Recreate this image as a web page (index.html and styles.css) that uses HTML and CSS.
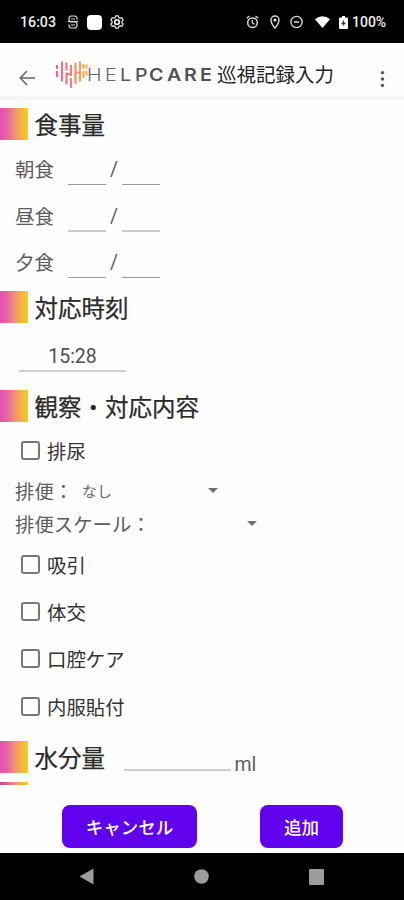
FILE: index.html
```
<!DOCTYPE html>
<html lang="ja">
<head>
<meta charset="utf-8">
<title>巡視記録入力</title>
<link rel="stylesheet" href="styles.css">
</head>
<body>
<div class="screen">
  <div class="status">
    <span class="clock">16:03</span>
    <svg class="st-s" width="12" height="14" viewBox="0 0 12 14"><path d="M10 4.500V3.300Q10 1 7.500 1h-3Q2 1 2 3.300v1.400Q2 7 4.500 7h3Q10 7 10 9v1.500Q10 13 7.500 13h-3Q2 13 2 10.500V9.500M1 6.500H11M4 4h4M4 10h4" fill="none" stroke="#ddd" stroke-width="1.200"/></svg>
    <span class="st-square"></span>
    <svg class="st-gear" width="14" height="14" viewBox="0 0 14 14"><path d="M5.700.8h2.600l.5 1.700 1.300.7 1.700-.5 1.300 2.200-1.200 1.300v1.600l1.200 1.300-1.300 2.200-1.700-.5-1.300.7-.5 1.700H5.700l-.5-1.700-1.300-.7-1.700.5L.9 9.100l1.200-1.300V6.200L.9 4.900l1.300-2.200 1.700.5 1.300-.7z" fill="none" stroke="#ddd" stroke-width="1.300"/><circle cx="7" cy="7" r="2.300" fill="none" stroke="#fff" stroke-width="1.600"/></svg>
    <span class="grow"></span>
    <svg class="st-alarm" width="13" height="14" viewBox="0 0 13 14"><circle cx="6.500" cy="7.700" r="4.800" fill="none" stroke="#ddd" stroke-width="1.500"/><path d="M.7 3.300 3.500.9M12.300 3.300 9.500.9M6.300 5v3l2.200 1.300" fill="none" stroke="#ddd" stroke-width="1.300"/></svg>
    <svg class="st-pin" width="10" height="14" viewBox="0 0 10 14"><path d="M5 13Q1 8.500 1 5a4 4 0 0 1 8 0Q9 8.500 5 13z" fill="none" stroke="#ddd" stroke-width="1.400"/><circle cx="5" cy="5" r="1.600" fill="#ddd"/></svg>
    <svg class="st-dnd" width="13" height="14" viewBox="0 0 13 14"><circle cx="6.500" cy="7" r="5.600" fill="none" stroke="#ddd" stroke-width="1.300"/><path d="M3.800 7h5.400" stroke="#ddd" stroke-width="1.500"/></svg>
    <svg class="st-wifi" width="15" height="12" viewBox="0 0 15 12"><path d="M0 3.300Q7.500-3 15 3.300L7.500 12z" fill="#fff"/></svg>
    <svg class="st-batt" width="9" height="13" viewBox="0 0 9 13"><path d="M3 0h3v1.500h2q1 0 1 1V12q0 1-1 1H1q-1 0-1-1V2.500q0-1 1-1h2z" fill="#fff"/><path d="M4.500 4.500v5M2.500 7.500h4" stroke="#333" stroke-width="1.300"/></svg>
    <span class="pct">100%</span>
  </div>

  <header class="appbar">
    <svg class="back" width="17" height="16" viewBox="0 0 17 16"><path d="M16 8H1.500M8 1 1.300 8 8 15" fill="none" stroke="#666" stroke-width="1.600"/></svg>
    <svg class="logo" width="33" height="29" viewBox="0 0 33 29">
      <defs><linearGradient id="heart" gradientUnits="userSpaceOnUse" x1="0" y1="0" x2="32" y2="0"><stop offset="0" stop-color="#e0669f"/><stop offset=".45" stop-color="#f07c84"/><stop offset="1" stop-color="#f5b548"/></linearGradient></defs>
      <path d="M2 5v4M2 11v6M7 1.500v20M11.500 2.500v8M11.500 12.500v12M16 5v11M16 18v10M20.500 3v21M25 1.500v20M28.500 4v4.500M28.500 11v7M31.500 4.500v4M31.500 11v4M11.500 14h4.500M20.500 12.500h4.500" fill="none" stroke="url(#heart)" stroke-width="2.200"/>
    </svg>
    <span class="brand"><b class="w1">H</b><b class="w1">E</b><b class="w2">L</b><b class="w3">P</b><b class="w4">C</b><b class="w4">A</b><b class="w4">R</b><b class="w4">E</b></span>
    <h1>巡視記録入力</h1>
    <span class="grow"></span>
    <svg class="more" width="5" height="18" viewBox="0 0 5 18"><circle cx="2.500" cy="2.600" r="1.700" fill="#555"/><circle cx="2.500" cy="9" r="1.700" fill="#555"/><circle cx="2.500" cy="15.400" r="1.700" fill="#555"/></svg>
  </header>

  <main>
    <h2>食事量</h2>
    <div class="meals">
      <div class="meal"><span>朝食</span><i class="line"></i><em>/</em><i class="line"></i></div>
      <div class="meal thick"><span>昼食</span><i class="line"></i><em>/</em><i class="line"></i></div>
      <div class="meal"><span>夕食</span><i class="line"></i><em>/</em><i class="line"></i></div>
    </div>
    <h2>対応時刻</h2>
    <div class="time">15:28</div>
    <h2>観察・対応内容</h2>
    <label class="check first"><i class="box"></i>排尿</label>
    <div class="select"><span>排便：</span><small>なし</small><i class="caret"></i></div>
    <div class="select scale"><span>排便スケール：</span><i class="caret"></i></div>
    <div class="checks">
      <label class="check"><i class="box"></i>吸引</label>
      <label class="check"><i class="box"></i>体交</label>
      <label class="check"><i class="box"></i>口腔ケア</label>
      <label class="check"><i class="box"></i>内服貼付</label>
    </div>
    <div class="water"><h2>水分量</h2><i class="line"></i><span class="unit">ml</span></div>
    <div class="sliver"></div>
  </main>

  <footer class="actions"><button class="cancel">キャンセル</button><button class="add">追加</button></footer>
  <nav>
    <svg width="15" height="17" viewBox="0 0 15 17"><path d="M14.500.5v16L.5 8.500z" fill="#9b9b9b"/></svg>
    <svg width="15" height="15" viewBox="0 0 15 15"><circle cx="7.500" cy="7.500" r="7.300" fill="#9b9b9b"/></svg>
    <svg width="15" height="16" viewBox="0 0 15 16"><rect width="15" height="16" rx="1" fill="#9b9b9b"/></svg>
  </nav>
</div>
</body>
</html>
```
FILE: styles.css
```
* { box-sizing: border-box; }
body { margin: 0; background: #fff; font-family: Roboto, "Noto Sans CJK JP", sans-serif; }
.screen { width: 404px; height: 900px; overflow: hidden; display: flex; flex-direction: column; background: #fefefe; }
svg { display: block; flex: none; }
i, em, b { font-style: normal; }
.grow { flex: 1; }

.status { height: 43px; flex: none; display: flex; align-items: center; background: #000; color: #eee; padding: 1px 19px 0 20px; }
.clock { width: 47px; font-size: 14.2px; font-weight: 500; }
.st-square { width: 15px; height: 15px; margin: 0 8px 0 8px; border-radius: 4px; background: #fff; }
.st-alarm { margin-right: 11px; }
.st-pin { margin-right: 10px; }
.st-dnd { margin-right: 12px; }
.st-wifi { margin-right: 9px; }
.st-batt { margin-right: 4px; }
.pct { width: 33px; font-size: 14px; font-weight: 500; white-space: nowrap; }

.appbar { height: 57px; flex: none; display: flex; align-items: flex-start; padding-left: 19px; padding-right: 19px; border-bottom: 4px solid #f5f5f5; background: #fefefe; }
.back { margin-top: 27px; }
.logo { margin: 17px 0 0 19px; }
.brand { display: grid; grid-template-columns: 18px 15px 15px 14px 18px 17px 16px 16px; justify-items: start; width: 129px; margin-top: 20px; margin-left: -1px; font: 17.5px/24px Inter, sans-serif; color: #555; }
.brand b { transform: scaleX(1.12); transform-origin: left; }
.brand .w1 { font-weight: 300; color: #666; }
.brand .w2 { font-weight: 400; }
.brand .w3 { font-weight: 500; }
.brand .w4 { font-weight: 600; color: #505050; }
h1 { margin: 18px 0 0 1px; font-size: 19.5px; line-height: 30px; font-weight: 400; color: #222; white-space: nowrap; }
.more { margin-top: 27px; }

main { flex: none; height: 698px; display: flex; flex-direction: column; padding-top: 8px; }
h2 { display: flex; align-items: flex-start; gap: 6.500px; height: 32px; flex: none; margin: 0; font-size: 23.5px; line-height: 36px; font-weight: 400; -webkit-text-stroke: .25px #2a2a2a; color: #2a2a2a; white-space: nowrap; }
h2::before { content: ""; width: 28px; height: 32px; background: linear-gradient(90deg, #e34eb4, #e965a4 25%, #f2a062 62%, #f7cb20 96%); }

.meals { height: 150.5px; padding-top: 7px; }
.meal { height: 46.5px; display: flex; padding-left: 15px; font-size: 19.5px; line-height: 47px; color: #5c5c5c; }
.meal span { width: 53px; }
.meal .line { width: 38px; height: 1px; margin-top: 37px; background: #999; }
.meal em { width: 16px; text-align: center; line-height: 46px; }
.meal.thick .line { height: 2px; margin-top: 36px; background: #ccc; }
.time { width: 107px; height: 49px; margin: 0 0 18px 19px; border-bottom: 2px solid #d0d0d0; text-align: center; font-size: 19.5px; line-height: 68px; color: #505050; }

.check { display: flex; align-items: center; height: 47.2px; padding-left: 21px; gap: 8px; font-size: 19.4px; color: #333; }
.check .box { width: 19px; height: 19px; margin-right: -1px; border: 2px solid #777; border-radius: 3px; }
.check.first { height: 57px; flex: none; }
.select { display: flex; align-items: center; height: 33.5px; flex: none; margin-top: -5px; padding-left: 15px; font-size: 19.4px; color: #5c5c5c; }
.select span { width: 67px; }
.select small { width: 126px; font-size: 15px; color: #666; }
.select .caret { width: 0; height: 0; border: 5px solid transparent; border-top-color: #707070; border-bottom: 0; }
.select.scale { margin-top: 0; }
.select.scale span { width: 232px; }
.checks { height: 200.5px; padding-top: .5px; flex: none; }
.water { display: flex; height: 41px; flex: none; }
.water .line { width: 107px; height: 2px; margin: 28px 4px 0 18.500px; background: #ccc; }
.water .unit { font-size: 19.5px; line-height: 48px; color: #5c5c5c; }
.sliver { width: 28px; height: 3px; flex: none; background: linear-gradient(90deg, #d63a9d, #f2a062 62%, #f7cb20); }

.actions { height: 55px; flex: none; display: flex; padding: 7px 0 0 62px; gap: 63px; background: #fefefe; }
button { height: 43px; padding: 0; border: 0; border-radius: 8px; background: #6002ee; color: #fff; font-family: inherit; font-size: 17.5px; font-weight: 500; }
.cancel { width: 135px; }
.add { width: 83px; }
nav { height: 47px; flex: none; display: flex; align-items: center; gap: 100px; padding-left: 79px; background: #000; }
```
